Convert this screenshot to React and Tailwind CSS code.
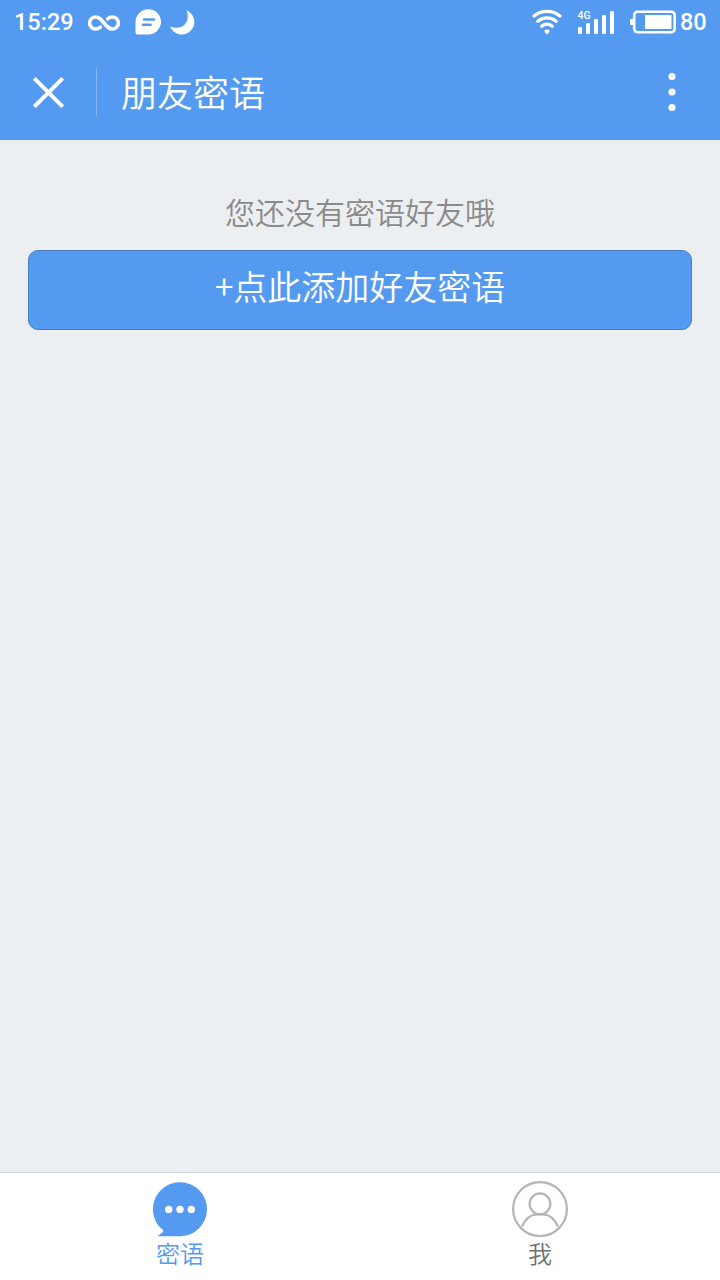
import React, { useState } from 'react';

function InfinityIcon() {
  return (
    <svg width="34" height="18" viewBox="0 0 34 18" fill="none" stroke="white" strokeWidth="3.6" strokeLinecap="round">
      <path d="M13.400 13.200C12 14.400 10.600 15 8.600 15a6 6 0 0 1 0-12c3.200 0 5 2 8.400 6s5.200 6 8.400 6a6 6 0 0 0 0-12c-2 0-3.400 0.600-4.800 1.800" />
    </svg>
  );
}

function MessageIcon() {
  return (
    <svg width="26" height="26" viewBox="0 0 26 26">
      <path d="M13.500 0.300a12.600 12.600 0 0 1 0 25.200H2.500a2 2 0 0 1-2-2V13A12.800 12.700 0 0 1 13.500 0.300z" fill="white" />
      <path d="M9 10.500h10M8 15.700h7.500" stroke="#559af1" strokeWidth="2.600" strokeLinecap="round" />
    </svg>
  );
}

function MoonIcon() {
  return (
    <svg width="26" height="26" viewBox="0 0 26 26">
      <path d="M17.300 1.200A12.600 12.600 0 1 1 1 17.500C6.500 20 12.600 19 16.200 15C19.400 11.200 19.400 5.600 17.300 1.200z" fill="white" />
    </svg>
  );
}

function WifiIcon() {
  return (
    <svg width="32" height="26" viewBox="0 0 32 26" fill="none" stroke="white" strokeWidth="3.300" strokeLinecap="round">
      <path d="M3 7C10.600 0.800 21.400 0.800 29 7" />
      <path d="M6.800 12.200C12.200 7.700 19.800 7.700 25.200 12.200" />
      <path d="M10.700 17.200C13.900 14.600 18.100 14.600 21.300 17.200" />
      <path d="M13.400 21.800C13.800 20 18.200 20 18.600 21.800C18.600 23 16.800 25.200 16 25.200C15.200 25.200 13.400 23 13.400 21.800z" fill="white" stroke="none" />
    </svg>
  );
}

function SignalIcon() {
  return (
    <svg className="-mt-1" width="38" height="29" viewBox="0 -4 38 29" fill="white">
      <text x="0.500" y="9.300" fontSize="11.500" fontWeight="500" textLength="13" lengthAdjust="spacingAndGlyphs" fontFamily="Roboto, sans-serif">4G</text>
      <rect x="1" y="17" width="4" height="7" rx="1.300" />
      <rect x="9" y="13" width="4" height="11" rx="1.300" />
      <rect x="17" y="9" width="4" height="15" rx="1.300" />
      <rect x="25" y="5" width="4" height="19" rx="1.300" />
      <rect x="33" y="1" width="4" height="23" rx="1.300" />
    </svg>
  );
}

function BatteryIcon() {
  return (
    <svg width="46" height="24" viewBox="0 0 46 24">
      <rect x="4.200" y="1.700" width="40.500" height="20.600" rx="3.500" fill="none" stroke="white" strokeWidth="2.600" />
      <rect x="15" y="5" width="26.500" height="14" fill="white" />
      <rect x="0" y="9" width="4" height="6" rx="1" fill="white" />
    </svg>
  );
}

function StatusBar() {
  return (
    <div className="flex h-11 items-center justify-between pl-3.5 pr-3.5 font-[Roboto,sans-serif] text-[23.5px] font-medium text-white">
      <div className="flex items-center">
        <span className="w-[73px] pt-0.5">15:29</span>
        <div className="pt-px">
          <InfinityIcon />
        </div>
        <div className="ml-3.5">
          <MessageIcon />
        </div>
        <div className="ml-2">
          <MoonIcon />
        </div>
      </div>
      <div className="flex items-center">
        <WifiIcon />
        <div className="ml-3.5">
          <SignalIcon />
        </div>
        <div className="ml-[15px] mr-1">
          <BatteryIcon />
        </div>
        <span className="w-[26px] pt-0.5">80</span>
      </div>
    </div>
  );
}

function Header() {
  return (
    <div className="flex h-24 items-center text-white">
      <button className="flex w-24 justify-center" aria-label="关闭">
        <svg width="32" height="32" viewBox="0 0 32 32" stroke="white" strokeWidth="4">
          <path d="M2.300 2.300L30.700 30.700M30.700 2.300L2.300 30.700" />
        </svg>
      </button>
      <div className="h-12 w-px bg-[#86b7f6]" />
      <h1 className="ml-6 flex-1 pb-[3px] text-4xl">朋友密语</h1>
      <button className="flex w-24 justify-center" aria-label="更多">
        <svg width="8" height="40" viewBox="0 0 8 40" fill="white">
          <circle cx="4" cy="4.500" r="3.600" />
          <circle cx="4" cy="20" r="3.600" />
          <circle cx="4" cy="35.500" r="3.600" />
        </svg>
      </button>
    </div>
  );
}

function ChatIcon() {
  return (
    <svg width="56" height="56" viewBox="0 0 56 56">
      <path d="M28 1.200A27 27 0 0 1 28 55.200H5.500C8.500 53.500 10.500 52 11.500 49.600A27 27 0 0 1 28 1.200z" fill="#559af1" />
      <g fill="white">
        <circle cx="16.700" cy="28.400" r="3.700" />
        <circle cx="28" cy="28.400" r="3.700" />
        <circle cx="39.300" cy="28.400" r="3.700" />
      </g>
    </svg>
  );
}

function UserIcon() {
  return (
    <svg width="56" height="56" viewBox="0 0 56 56" fill="none" stroke="#b5b5b5" strokeWidth="2.200">
      <circle cx="28" cy="28.100" r="26.900" />
      <circle cx="28" cy="22.800" r="10.400" />
      <path d="M10 45.500C13.500 38 18.500 33.500 24.500 33.500H31.500C37.500 33.500 42.500 38 46 45.500" />
    </svg>
  );
}

const tabs = [
  { id: 'secret', label: '密语', icon: ChatIcon, color: 'text-[#559af1]' },
  { id: 'me', label: '我', icon: UserIcon, color: 'text-[#707070]' },
];

export default function App() {
  const [activeTab, setActiveTab] = useState('secret');

  return (
    <div className="flex h-screen flex-col bg-[#eceff2] font-['Noto_Sans_CJK_SC_DemiLight','Noto_Sans_CJK_SC',sans-serif]">
      {/* Top bar */}
      <header className="bg-[#559af1]">
        <StatusBar />
        <Header />
      </header>

      {/* Empty state */}
      <main className="flex-1 px-7 pt-[49px]">
        <p className="text-center text-[30px] leading-[44px] text-[#8a8a8a]">您还没有密语好友哦</p>
        <button className="mt-[17px] h-20 w-full rounded-[10px] border border-[#477db9] bg-[#559af1] pb-2 text-[34px] leading-none text-white">
          +点此添加好友密语
        </button>
      </main>

      {/* Bottom tabs */}
      <nav className="flex h-[108px] border-t border-[#d2d3d5] bg-white">
        {tabs.map(({ id, label, icon: Icon, color }) => (
          <button
            key={id}
            onClick={() => setActiveTab(id)}
            aria-selected={activeTab === id}
            className={`flex flex-1 flex-col items-center pt-2 ${color}`}
          >
            <Icon />
            <span className="text-2xl leading-8">{label}</span>
          </button>
        ))}
      </nav>
    </div>
  );
}
